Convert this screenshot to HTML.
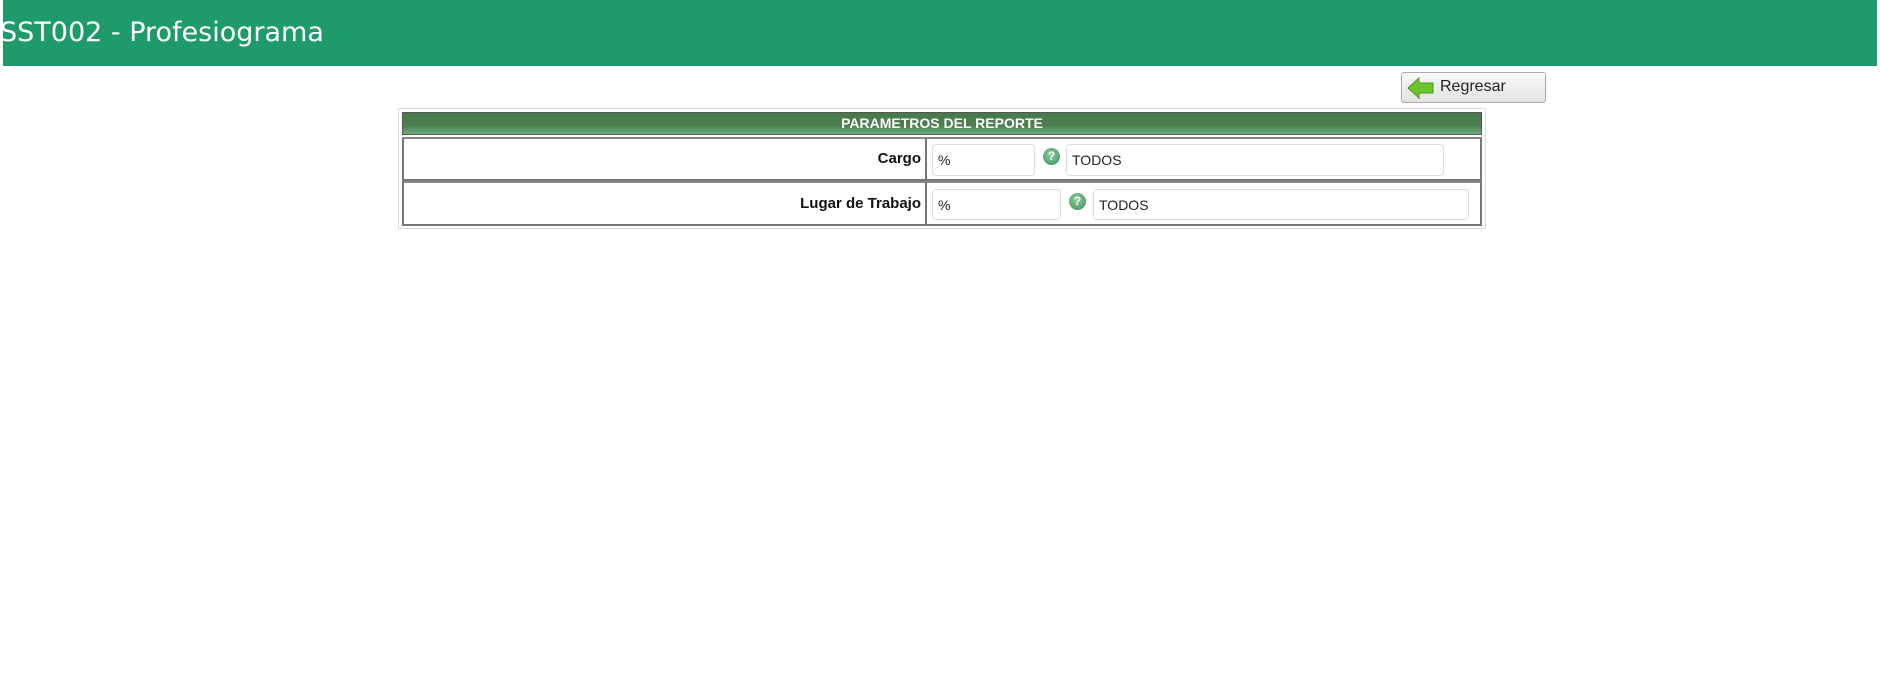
<!DOCTYPE html>
<html><head><meta charset="utf-8"><style>
body{margin:0;width:1880px;height:697px;background:#fff;position:relative;overflow:hidden;font-family:"Liberation Sans",sans-serif}
.hdr{position:absolute;left:3px;top:0;width:1874px;height:66px;background:#1e9a6c}
.hdr span{position:absolute;left:-3px;top:17px;color:#fff;font-family:"DejaVu Sans",sans-serif;font-size:27px;white-space:nowrap}
.btn{position:absolute;left:1401px;top:72px;width:145px;height:31px;border:1px solid #aaa;border-radius:3px;background:linear-gradient(#fafafa,#e2e2e2);box-sizing:border-box}
.btn span{position:absolute;left:38px;top:5px;font-size:16px;color:#222}
.outer{position:absolute;left:398px;top:108px;width:1088px;height:121px;border:1px solid #ddd;box-sizing:border-box}
.bar{position:absolute;left:402px;top:112px;width:1080px;height:23px;background:linear-gradient(#4a7a4a 0%,#4d7e50 60%,#6ab07a 100%);border:1px solid #555;box-sizing:border-box;color:#fff;font-weight:bold;font-size:14px;text-align:center;line-height:21px}
.cell{position:absolute;border:2px solid #777;border-top-color:#888;box-sizing:border-box;background:#fff}
.lbl{position:absolute;font-weight:bold;font-size:15px;color:#111;text-align:right}
.in{position:absolute;border:1px solid #ddd;border-radius:4px;box-sizing:border-box;font-size:14px;color:#222;padding-left:5px}
.q{position:absolute;width:17px;height:17px;border-radius:50%;background:radial-gradient(circle at 45% 40%,#8fd0a0,#3c8a55);color:#fff;font-size:12px;font-weight:bold;text-align:center;line-height:17px}
</style></head><body>
<div class="hdr"><span>SST002 - Profesiograma</span></div>
<div class="btn"><svg style="position:absolute;left:5px;top:4px" width="28" height="22" viewBox="0 0 28 22"><path d="M1 11 L12 1 L12 6 L26 6 L26 16 L12 16 L12 21 Z" fill="#6fc42e" stroke="#4a9a1c" stroke-width="1"/></svg><span>Regresar</span></div>
<div class="outer"></div>
<div class="bar">PARAMETROS DEL REPORTE</div>
<div class="cell" style="left:402px;top:137px;width:526px;height:44px"></div>
<div class="cell" style="left:925px;top:137px;width:557px;height:44px"></div>
<div class="cell" style="left:402px;top:181px;width:526px;height:45px"></div>
<div class="cell" style="left:925px;top:181px;width:557px;height:45px"></div>
<div class="lbl" style="left:500px;width:421px;top:150px;line-height:18px">Cargo</div>
<div class="lbl" style="left:500px;width:421px;top:195px;line-height:18px">Lugar de Trabajo</div>
<div class="in" style="left:932px;top:144px;width:103px;height:32px;line-height:30px">%</div>
<div class="q" style="left:1043px;top:148px">?</div>
<div class="in" style="left:1066px;top:144px;width:378px;height:32px;line-height:30px">TODOS</div>
<div class="in" style="left:932px;top:189px;width:129px;height:31px;line-height:30px">%</div>
<div class="q" style="left:1069px;top:193px">?</div>
<div class="in" style="left:1093px;top:189px;width:376px;height:31px;line-height:30px">TODOS</div>
</body></html>
